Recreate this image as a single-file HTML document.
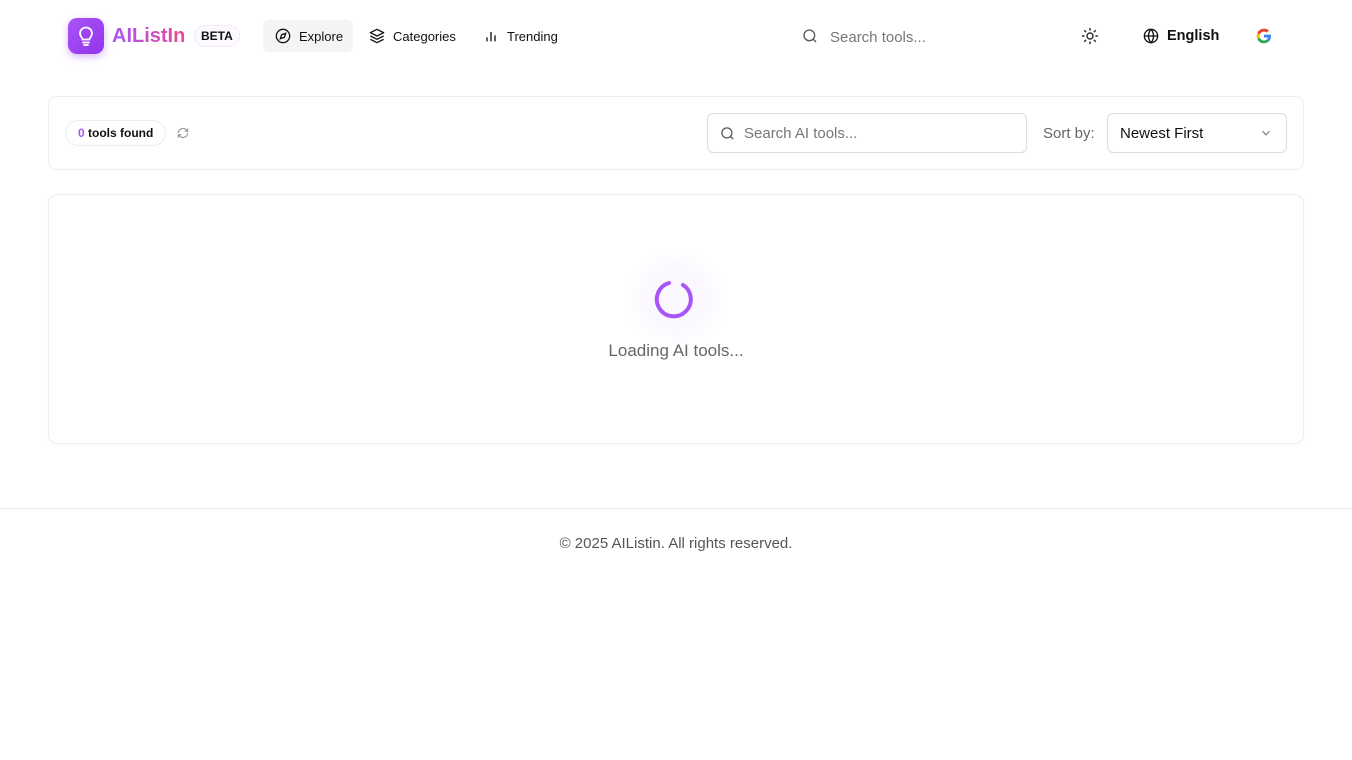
<!DOCTYPE html>
<html><head><meta charset="utf-8"><style>
*{box-sizing:border-box;margin:0;padding:0}
body{width:1352px;height:760px;background:#fff;font-family:"Liberation Sans",sans-serif;color:#111;position:relative;overflow:hidden}
.abs{position:absolute}
svg{display:block}
</style></head><body>
<div class="abs" style="left:68px;top:18px;width:36px;height:36px;border-radius:9px;background:linear-gradient(135deg,#a855f7,#9333ea);box-shadow:0 3px 8px rgba(147,51,234,.35)">
<svg width="36" height="36" viewBox="0 0 36 36" fill="none" stroke="#fff" stroke-width="1.8" stroke-linecap="round"><path d="M14.5 21.5c0-2-2.5-3-2.5-6a6 6 0 0 1 12 0c0 3-2.5 4-2.5 6z"/><path d="M15 24.5h6M16 27h4"/></svg></div>
<div class="abs" style="left:112px;top:25px;font-size:20px;font-weight:bold;background:linear-gradient(90deg,#a855f7,#ec4899);-webkit-background-clip:text;color:transparent">AIListIn</div>
<div class="abs" style="left:194px;top:25px;height:22px;padding:0 6px;border:1px solid #f3e8ff;border-radius:11px;font-size:12px;font-weight:bold;line-height:20px;background:#fdfaff">BETA</div>
<div class="abs" style="left:263px;top:20px;width:90px;height:32px;border-radius:6px;background:#f3f4f6"></div>
<svg class="abs" style="left:275px;top:28px" width="16" height="16" viewBox="0 0 24 24" fill="none" stroke="#111" stroke-width="2"><circle cx="12" cy="12" r="10"/><path d="M16 8l-2 6-6 2 2-6z"/></svg>
<div class="abs" style="left:299px;top:29px;font-size:13px">Explore</div>
<svg class="abs" style="left:369px;top:28px" width="16" height="16" viewBox="0 0 24 24" fill="none" stroke="#111" stroke-width="2" stroke-linejoin="round"><path d="M12 2 2 7l10 5 10-5z"/><path d="M2 12l10 5 10-5M2 17l10 5 10-5"/></svg>
<div class="abs" style="left:393px;top:29px;font-size:13px">Categories</div>
<svg class="abs" style="left:483px;top:28px" width="16" height="16" viewBox="0 0 24 24" fill="none" stroke="#111" stroke-width="2"><path d="M6 20v-6M12 20V6M18 20v-9"/></svg>
<div class="abs" style="left:507px;top:29px;font-size:13px">Trending</div>
<svg class="abs" style="left:802px;top:28px" width="16" height="16" viewBox="0 0 24 24" fill="none" stroke="#555" stroke-width="2"><circle cx="11" cy="11" r="8"/><path d="M21 21l-4.3-4.3"/></svg>
<div class="abs" style="left:830px;top:29px;font-size:15px;color:#777">Search tools...</div>
<svg class="abs" style="left:1081px;top:27px" width="18" height="18" viewBox="0 0 24 24" fill="none" stroke="#333" stroke-width="2" stroke-linecap="round"><circle cx="12" cy="12" r="4"/><path d="M12 2v2M12 20v2M4.9 4.9l1.4 1.4M17.7 17.7l1.4 1.4M2 12h2M20 12h2M4.9 19.1l1.4-1.4M17.7 6.3l1.4-1.4"/></svg>
<svg class="abs" style="left:1143px;top:28px" width="16" height="16" viewBox="0 0 24 24" fill="none" stroke="#111" stroke-width="2"><circle cx="12" cy="12" r="10"/><path d="M2 12h20M12 2a15 15 0 0 1 0 20a15 15 0 0 1 0-20"/></svg>
<div class="abs" style="left:1167px;top:28px;font-size:14.5px;font-weight:bold;color:#111">English</div>
<svg class="abs" style="left:1256px;top:28px" width="16" height="16" viewBox="0 0 24 24"><path d="M22.5 12.2c0-.8-.1-1.5-.2-2.2H12v4.2h5.9a5 5 0 0 1-2.2 3.3v2.7h3.6c2-1.9 3.2-4.7 3.2-8z" fill="#4285f4"/><path d="M12 23c3 0 5.5-1 7.3-2.7l-3.6-2.7c-1 .7-2.2 1.1-3.7 1.1-2.9 0-5.3-1.9-6.2-4.5H2.1v2.8A11 11 0 0 0 12 23z" fill="#34a853"/><path d="M5.8 14.2a6.6 6.6 0 0 1 0-4.3V7.1H2.1a11 11 0 0 0 0 9.9z" fill="#fbbc05"/><path d="M12 5.4c1.6 0 3.1.6 4.2 1.6l3.2-3.2A11 11 0 0 0 2.1 7.1l3.7 2.8C6.7 7.3 9.1 5.4 12 5.4z" fill="#ea4335"/></svg>
<div class="abs" style="left:48px;top:96px;width:1256px;height:74px;border:1px solid #eee;border-radius:8px"></div>
<div class="abs" style="left:65px;top:120px;height:26px;padding:0 12px;border:1px solid #eee;border-radius:13px;font-size:12px;font-weight:bold;line-height:24px"><span style="color:#a855f7">0</span> tools found</div>
<svg class="abs" style="left:176px;top:126px" width="14" height="14" viewBox="0 0 24 24" fill="none" stroke="#999" stroke-width="2"><path d="M4 12a8 8 0 0 1 14-5l2 2M20 12a8 8 0 0 1-14 5l-2-2M20 4v5h-5M4 20v-5h5"/></svg>
<div class="abs" style="left:707px;top:113px;width:320px;height:40px;border:1px solid #ddd;border-radius:6px"></div>
<svg class="abs" style="left:720px;top:126px" width="15" height="15" viewBox="0 0 24 24" fill="none" stroke="#555" stroke-width="2"><circle cx="11" cy="11" r="8"/><path d="M21 21l-4.3-4.3"/></svg>
<div class="abs" style="left:744px;top:125px;font-size:15px;color:#777">Search AI tools...</div>
<div class="abs" style="left:1043px;top:125px;font-size:15px;color:#666">Sort by:</div>
<div class="abs" style="left:1107px;top:113px;width:180px;height:40px;border:1px solid #ddd;border-radius:6px"></div>
<div class="abs" style="left:1120px;top:125px;font-size:15px;color:#111">Newest First</div>
<svg class="abs" style="left:1259px;top:126px" width="14" height="14" viewBox="0 0 24 24" fill="none" stroke="#777" stroke-width="2"><path d="M6 9l6 6 6-6"/></svg>
<div class="abs" style="left:48px;top:194px;width:1256px;height:250px;border:1px solid #eee;border-radius:10px;box-shadow:0 1px 3px rgba(0,0,0,.04)"></div>
<div class="abs" style="left:625px;top:248px;width:102px;height:102px;border-radius:50%;background:radial-gradient(circle,#fbf8ff 40%,#fff 72%)"></div>
<svg class="abs" style="left:654px;top:277px" width="44" height="44" viewBox="0 0 44 44" fill="none" stroke="#a855f7" stroke-width="4" stroke-linecap="round"><path d="M29 8A17 17 0 1 1 15 6"/></svg>
<div class="abs" style="left:0;width:1352px;top:341px;text-align:center;font-size:17px;color:#666">Loading AI tools...</div>
<div class="abs" style="left:0;top:508px;width:1352px;border-top:1px solid #e5e5e5"></div>
<div class="abs" style="left:0;width:1352px;top:535px;text-align:center;font-size:15px;color:#555">© 2025 AIListin. All rights reserved.</div>
</body></html>
